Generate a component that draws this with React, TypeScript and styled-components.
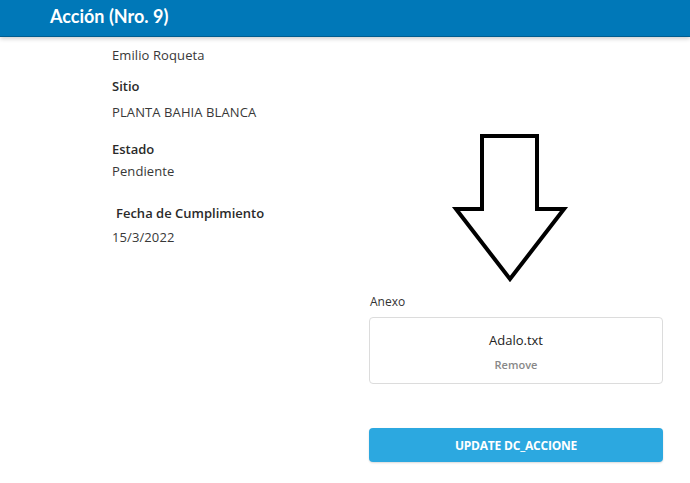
import React from "react";
import styled, { createGlobalStyle } from "styled-components";

const Global = createGlobalStyle`
  html, body { margin: 0; padding: 0; background: #ffffff; }
  body { font-family: "Open Sans", "Noto Sans", sans-serif; color: #333; }
  * { box-sizing: border-box; }
`;

const Page = styled.div`
  width: 690px;
  height: 483px;
  overflow: hidden;
  background: #fff;
`;

const Header = styled.header`
  height: 37px;
  background: #0078b8;
  border-bottom: 1px solid #005d8f;
  box-shadow: 0 2px 4px rgba(0, 0, 0, 0.18);
  display: flex;
  align-items: center;
  padding-left: 50px;
  position: relative;
  z-index: 1;
`;

const Title = styled.h1`
  margin: 0;
  font-family: "Lato", "Open Sans", sans-serif;
  font-weight: 700;
  font-size: 18px;
  color: #ffffff;
  line-height: 1;
  margin-top: -4px;
`;

const Main = styled.main`
  display: flex;
  padding-left: 112px;
`;

const LeftCol = styled.section`
  width: 257px;
  display: flex;
  flex-direction: column;
`;

const Label = styled.div<{ $top: number; $indent?: number }>`
  margin-top: ${(p) => p.$top}px;
  padding-left: ${(p) => p.$indent ?? 0}px;
  font-size: 13px;
  line-height: 18px;
  font-weight: 600;
  color: #2a2a2a;
`;

const Value = styled.div<{ $top: number }>`
  margin-top: ${(p) => p.$top}px;
  font-size: 13px;
  line-height: 18px;
  color: #383838;
  letter-spacing: 0.1px;
`;

const RightCol = styled.section`
  width: 294px;
  display: flex;
  flex-direction: column;
`;

const ArrowWrap = styled.div`
  margin-top: 92px;
  margin-left: 81px;
  width: 120px;
  height: 158px;
`;

const FieldLabel = styled.div`
  margin-top: 6px;
  font-size: 12px;
  line-height: 18px;
  color: #333;
  padding-left: 1px;
`;

const FileBox = styled.div`
  margin-top: 6px;
  height: 67px;
  border: 1px solid #dcdcdc;
  border-radius: 4px;
  display: flex;
  flex-direction: column;
  align-items: center;
  justify-content: center;
  gap: 10px;
  padding-top: 3px;
`;

const FileName = styled.div`
  font-size: 13px;
  line-height: 16px;
  color: #222;
`;

const RemoveLink = styled.div`
  font-size: 11px;
  line-height: 14px;
  font-weight: 600;
  color: #888;
`;

const SubmitButton = styled.button`
  margin-top: 44px;
  height: 34px;
  width: 100%;
  border: none;
  border-radius: 4px;
  background: #2ca8e0;
  color: #fff;
  font-family: "Open Sans", "Noto Sans", sans-serif;
  font-weight: 700;
  font-size: 12px;
  letter-spacing: -0.2px;
  box-shadow: 0 1px 2px rgba(0, 0, 0, 0.15);
  cursor: pointer;
`;

const DownArrow = () => (
  <svg width="120" height="158" viewBox="0 0 120 158">
    <polygon
      points="32,7 87,7 87,80 114,80 60,150 6,80 32,80"
      fill="#fff"
      stroke="#000"
      strokeWidth={4}
      strokeLinejoin="miter"
    />
  </svg>
);

export default function App() {
  return (
    <Page>
      <Global />
      <Header>
        <Title>Acción (Nro. 9)</Title>
      </Header>
      <Main>
        <LeftCol>
          <Value $top={9}>Emilio Roqueta</Value>
          <Label $top={13}>Sitio</Label>
          <Value $top={8}>PLANTA BAHIA BLANCA</Value>
          <Label $top={19}>Estado</Label>
          <Value $top={4}>Pendiente</Value>
          <Label $top={24} $indent={4}>Fecha de Cumplimiento</Label>
          <Value $top={6}>15/3/2022</Value>
        </LeftCol>
        <RightCol>
          <ArrowWrap>
            <DownArrow />
          </ArrowWrap>
          <FieldLabel>Anexo</FieldLabel>
          <FileBox>
            <FileName>Adalo.txt</FileName>
            <RemoveLink>Remove</RemoveLink>
          </FileBox>
          <SubmitButton>UPDATE DC_ACCIONE</SubmitButton>
        </RightCol>
      </Main>
    </Page>
  );
}
